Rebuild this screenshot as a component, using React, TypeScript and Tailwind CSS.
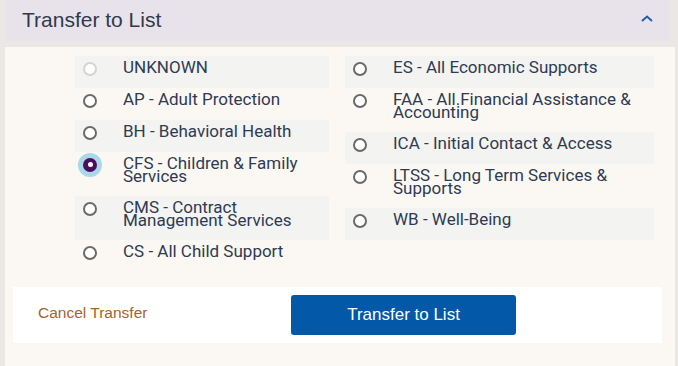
import React, { useState } from 'react';

interface Option {
  id: string;
  label: string;
  disabled?: boolean;
}

const leftOptions: Option[] = [
  { id: 'UNKNOWN', label: 'UNKNOWN', disabled: true },
  { id: 'AP', label: 'AP - Adult Protection' },
  { id: 'BH', label: 'BH - Behavioral Health' },
  { id: 'CFS', label: 'CFS - Children & Family Services' },
  { id: 'CMS', label: 'CMS - Contract Management Services' },
  { id: 'CS', label: 'CS - All Child Support' },
];

const rightOptions: Option[] = [
  { id: 'ES', label: 'ES - All Economic Supports' },
  { id: 'FAA', label: 'FAA - All.Financial Assistance & Accounting' },
  { id: 'ICA', label: 'ICA - Initial Contact & Access' },
  { id: 'LTSS', label: 'LTSS - Long Term Services & Supports' },
  { id: 'WB', label: 'WB - Well-Being' },
];

const Radio: React.FC<{ checked: boolean; disabled?: boolean }> = ({ checked, disabled }) => {
  if (checked) {
    return (
      <span className="w-[24px] h-[24px] rounded-full bg-[#aad8e8] flex items-center justify-center shrink-0">
        <span className="w-[14px] h-[14px] rounded-full bg-[#4b0e5e] flex items-center justify-center">
          <span className="w-[5px] h-[5px] rounded-full bg-white" />
        </span>
      </span>
    );
  }
  return (
    <span
      className={`w-[14px] h-[14px] rounded-full border-2 bg-white shrink-0 ${
        disabled ? 'border-[#d4d4d4]' : 'border-[#6a6a6a]'
      }`}
    />
  );
};

const OptionColumn: React.FC<{
  options: Option[];
  selected: string;
  onSelect: (id: string) => void;
  textClass: string;
}> = ({ options, selected, onSelect, textClass }) => (
  <div className="flex flex-col">
    {options.map((opt, i) => (
      <label
        key={opt.id}
        onClick={() => !opt.disabled && onSelect(opt.id)}
        className={`flex items-start pt-[5px] pb-[13px] pl-[8px] cursor-pointer ${
          i % 2 === 0 ? 'bg-[#f3f3f2]' : ''
        }`}
      >
        <span className="w-[14px] h-[13px] flex items-center justify-center mt-[1px]">
          <Radio checked={selected === opt.id} disabled={opt.disabled} />
        </span>
        <span className={`ml-[26px] text-[17px] leading-[13px] text-[#2e3b52] ${textClass}`}>
          {opt.label}
        </span>
      </label>
    ))}
  </div>
);

const App: React.FC = () => {
  const [selected, setSelected] = useState('CFS');

  return (
    <div className="w-[678px] h-[366px] bg-[#ebe7e4] pl-[5px] pr-[3px] overflow-hidden font-['Roboto',sans-serif]">
      {/* Header */}
      <div className="w-[665px] h-[41px] bg-[#e8e3ea] flex items-center justify-between pl-[17px] pr-[16px]">
        <h2 className="text-[21px] text-[#2f3a4c] font-['Liberation_Sans',Arial,sans-serif] font-normal pb-[1px]">
          Transfer to List
        </h2>
        <svg width="14" height="10" viewBox="0 0 14 10" className="mb-[4px]">
          <path d="M2 7 L7 2.5 L12 7" fill="none" stroke="#1f5ea8" strokeWidth="2" />
        </svg>
      </div>

      {/* Body */}
      <div className="mt-[6px] bg-[#fbf8f4] h-[319px] pt-[9px]">
        <div className="flex pl-[70px] gap-[16px]">
          <div className="w-[254px]">
            <OptionColumn options={leftOptions} selected={selected} onSelect={setSelected} textClass="pr-[12px]" />
          </div>
          <div className="w-[309px]">
            <OptionColumn options={rightOptions} selected={selected} onSelect={setSelected} textClass="pr-[8px]" />
          </div>
        </div>

        {/* Footer */}
        <div className="mt-[15px] ml-[8px] w-[649px] h-[56px] bg-white flex items-center">
          <button className="ml-[25px] w-[253px] text-left text-[15.5px] text-[#a4622c] font-['Liberation_Sans',Arial,sans-serif] pb-[4px]">
            Cancel Transfer
          </button>
          <button className="w-[225px] h-[40px] rounded-[3px] bg-[#0358a8] text-white text-[17px] font-['Liberation_Sans',Arial,sans-serif]">
            Transfer to List
          </button>
        </div>
      </div>
    </div>
  );
};

export default App;
